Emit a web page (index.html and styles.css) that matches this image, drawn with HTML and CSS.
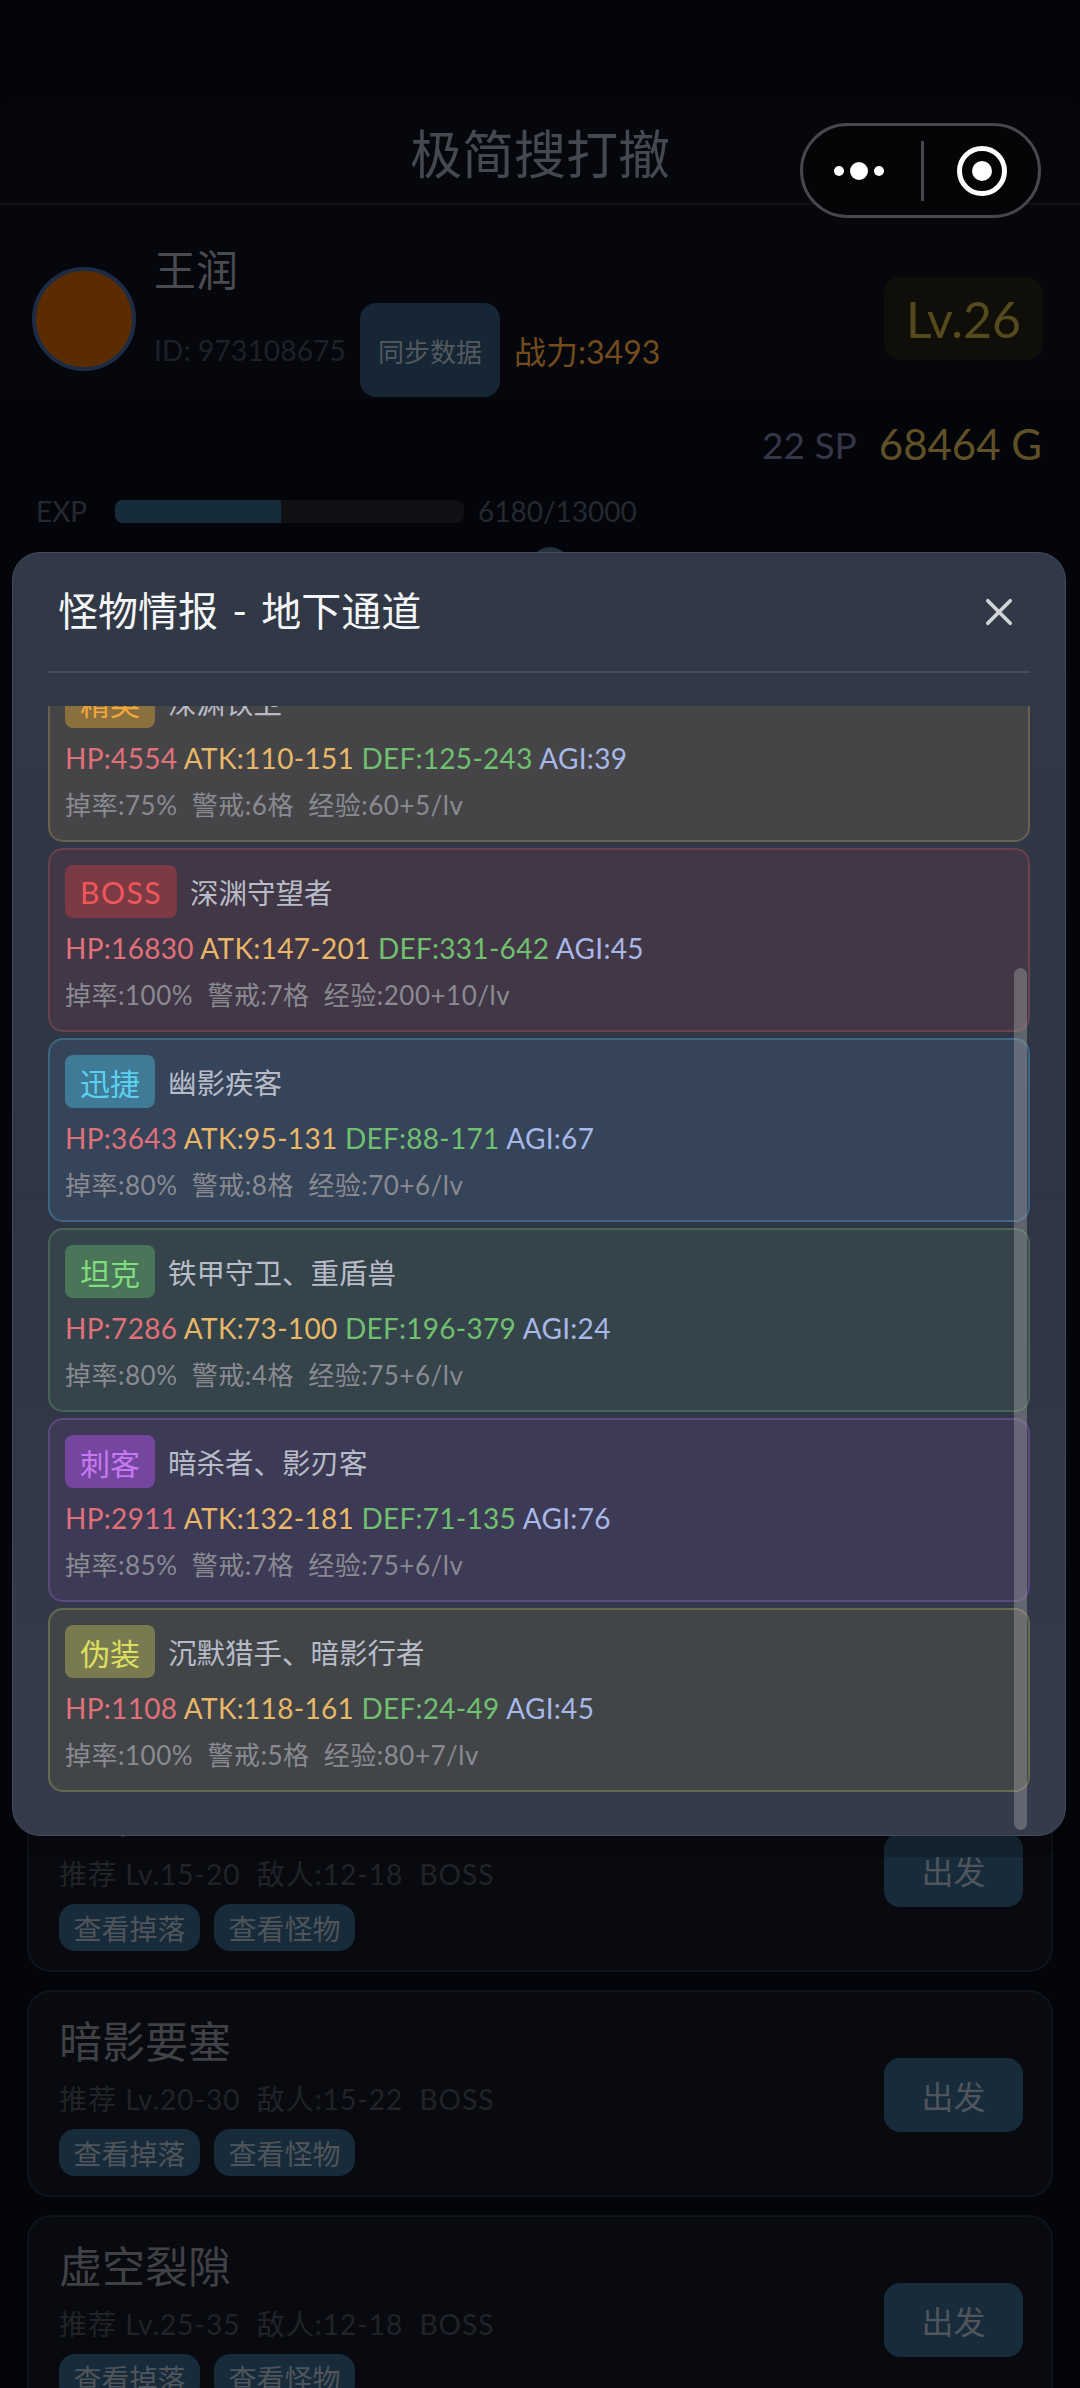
FILE: index.html
```html
<!DOCTYPE html>
<html lang="zh-CN">
<head>
  <meta charset="UTF-8" />
  <title>极简搜打撤</title>
  <link rel="stylesheet" href="styles.css">
</head>
<body>

  <div class="pagina">
    <div class="navbar">
      <span class="navbar-titulo">极简搜打撤</span>
    </div>

    <div class="perfil">
      <div class="avatar"></div>
      <div class="perfil-info">
        <div class="nome">王润</div>
        <div class="perfil-linha">
          <span class="id">ID: 973108675</span>
          <span class="btn-sync">同步数据</span>
          <span class="poder">战力:3493</span>
        </div>
      </div>
      <div class="nivel">Lv.26</div>
    </div>

    <div class="moedas">
      <span class="sp">22 SP</span>
      <span class="ouro">68464 G</span>
    </div>

    <div class="exp">
      <span class="exp-label">EXP</span>
      <div class="exp-barra"><div class="exp-fill" style="width: 47.5%"></div></div>
      <span class="exp-texto">6180/13000</span>
    </div>

    <div class="mapas">
      <div class="mapa">
        <div class="mapa-info">
          <div class="mapa-nome">地下通道</div>
          <div class="mapa-sub">推荐 Lv.15-20&nbsp;&nbsp;敌人:12-18&nbsp;&nbsp;BOSS</div>
          <div class="mapa-botoes"><span>查看掉落</span><span>查看怪物</span></div>
        </div>
        <div class="btn-sair">出发</div>
      </div>
      <div class="mapa">
        <div class="mapa-info">
          <div class="mapa-nome">暗影要塞</div>
          <div class="mapa-sub">推荐 Lv.20-30&nbsp;&nbsp;敌人:15-22&nbsp;&nbsp;BOSS</div>
          <div class="mapa-botoes"><span>查看掉落</span><span>查看怪物</span></div>
        </div>
        <div class="btn-sair">出发</div>
      </div>
      <div class="mapa">
        <div class="mapa-info">
          <div class="mapa-nome">虚空裂隙</div>
          <div class="mapa-sub">推荐 Lv.25-35&nbsp;&nbsp;敌人:12-18&nbsp;&nbsp;BOSS</div>
          <div class="mapa-botoes"><span>查看掉落</span><span>查看怪物</span></div>
        </div>
        <div class="btn-sair">出发</div>
      </div>
    </div>
  </div>

  <!-- botao do mini programa -->
  <div class="capsula">
    <svg class="capsula-mais" width="60" height="20" viewBox="0 0 60 20">
      <circle cx="10" cy="10" r="5" fill="#fff" />
      <circle cx="30" cy="10" r="9" fill="#fff" />
      <circle cx="50" cy="10" r="5" fill="#fff" />
    </svg>
    <span class="capsula-div"></span>
    <svg class="capsula-alvo" width="52" height="52" viewBox="0 0 52 52">
      <circle cx="26" cy="26" r="22.5" fill="none" stroke="#fff" stroke-width="5" />
      <circle cx="26" cy="26" r="10" fill="#fff" />
    </svg>
  </div>

  <div class="bolinha"></div>

  <!-- modal de monstros -->
  <div class="modal">
    <div class="modal-topo">
      <span class="modal-titulo">怪物情报 - 地下通道</span>
      <svg class="fechar" width="30" height="30" viewBox="0 0 30 30">
        <path d="M3 3 L27 27 M27 3 L3 27" stroke="#d0d2d6" stroke-width="4" stroke-linecap="round" fill="none" />
      </svg>
    </div>

    <div class="lista">
      <div class="monstro elite primeiro">
        <div class="monstro-topo"><span class="tag">精英</span><span class="monstro-nome">深渊铁卫</span></div>
        <div class="stats"><span class="hp">HP:4554</span> <span class="atk">ATK:110-151</span> <span class="def">DEF:125-243</span> <span class="agi">AGI:39</span></div>
        <div class="extra">掉率:75%&nbsp;&nbsp;警戒:6格&nbsp;&nbsp;经验:60+5/lv</div>
      </div>
      <div class="monstro boss">
        <div class="monstro-topo"><span class="tag">BOSS</span><span class="monstro-nome">深渊守望者</span></div>
        <div class="stats"><span class="hp">HP:16830</span> <span class="atk">ATK:147-201</span> <span class="def">DEF:331-642</span> <span class="agi">AGI:45</span></div>
        <div class="extra">掉率:100%&nbsp;&nbsp;警戒:7格&nbsp;&nbsp;经验:200+10/lv</div>
      </div>
      <div class="monstro rapido">
        <div class="monstro-topo"><span class="tag">迅捷</span><span class="monstro-nome">幽影疾客</span></div>
        <div class="stats"><span class="hp">HP:3643</span> <span class="atk">ATK:95-131</span> <span class="def">DEF:88-171</span> <span class="agi">AGI:67</span></div>
        <div class="extra">掉率:80%&nbsp;&nbsp;警戒:8格&nbsp;&nbsp;经验:70+6/lv</div>
      </div>
      <div class="monstro tanque">
        <div class="monstro-topo"><span class="tag">坦克</span><span class="monstro-nome">铁甲守卫、重盾兽</span></div>
        <div class="stats"><span class="hp">HP:7286</span> <span class="atk">ATK:73-100</span> <span class="def">DEF:196-379</span> <span class="agi">AGI:24</span></div>
        <div class="extra">掉率:80%&nbsp;&nbsp;警戒:4格&nbsp;&nbsp;经验:75+6/lv</div>
      </div>
      <div class="monstro assassino">
        <div class="monstro-topo"><span class="tag">刺客</span><span class="monstro-nome">暗杀者、影刃客</span></div>
        <div class="stats"><span class="hp">HP:2911</span> <span class="atk">ATK:132-181</span> <span class="def">DEF:71-135</span> <span class="agi">AGI:76</span></div>
        <div class="extra">掉率:85%&nbsp;&nbsp;警戒:7格&nbsp;&nbsp;经验:75+6/lv</div>
      </div>
      <div class="monstro disfarce">
        <div class="monstro-topo"><span class="tag">伪装</span><span class="monstro-nome">沉默猎手、暗影行者</span></div>
        <div class="stats"><span class="hp">HP:1108</span> <span class="atk">ATK:118-161</span> <span class="def">DEF:24-49</span> <span class="agi">AGI:45</span></div>
        <div class="extra">掉率:100%&nbsp;&nbsp;警戒:5格&nbsp;&nbsp;经验:80+7/lv</div>
      </div>
      <div class="rolagem"></div>
    </div>
  </div>

</body>
</html>
```

FILE: styles.css
```css
* {
  box-sizing: border-box;
}

html, body {
  margin: 0;
  height: 2388px;
  overflow: hidden;
}

body {
  font-family: Lato, "Noto Sans CJK SC", sans-serif;
  background-color: #04050a;
  position: relative;
}

.pagina {
  padding-top: 103px;
}

.navbar {
  height: 102px;
  display: flex;
  justify-content: center;
  align-items: center;
  background-color: #05070c;
  border-bottom: 2px solid #0e1015;
  border-radius: 12px 12px 0 0;
}

.navbar-titulo {
  font-size: 52px;
  color: #45484f;
  margin-top: -4px;
}

.perfil {
  display: flex;
  align-items: flex-start;
  padding: 44px 37px 0 32px;
  height: 194px;
  background-color: #05070c;
}

.avatar {
  width: 104px;
  height: 104px;
  margin-top: 18px;
  border-radius: 50%;
  background-color: #5b2c00;
  border: 4px solid #1d2c44;
  flex-shrink: 0;
}

.perfil-info {
  margin-left: 18px;
  flex: 1;
}

.nome {
  font-size: 42px;
  line-height: 42px;
  color: #4a4b50;
}

.perfil-linha {
  display: flex;
  align-items: center;
  gap: 14px;
  margin-top: 12px;
}

.id {
  font-size: 28px;
  letter-spacing: 0.2px;
  color: #1e2128;
}

.btn-sync {
  width: 140px;
  height: 94px;
  display: flex;
  justify-content: center;
  align-items: center;
  border-radius: 16px;
  background-color: #162634;
  font-size: 26px;
  color: #53595f;
}

.poder {
  font-size: 32px;
  color: #744b1d;
}

.nivel {
  width: 159px;
  height: 83px;
  margin-top: 28px;
  display: flex;
  justify-content: center;
  align-items: center;
  border-radius: 16px;
  background-color: #0f0e09;
  font-size: 50px;
  color: #554a1e;
}

.moedas {
  display: flex;
  justify-content: flex-end;
  align-items: center;
  gap: 22px;
  height: 50px;
  padding-right: 38px;
  margin-top: 20px;
}

.sp {
  font-size: 37px;
  color: #363649;
}

.ouro {
  font-size: 42px;
  color: #5f5027;
}

.exp {
  display: flex;
  align-items: center;
  height: 60px;
  padding: 0 36px;
  margin-top: 12px;
  gap: 14px;
  font-size: 28px;
  color: #242931;
}

.exp-label {
  width: 65px;
}

.exp-barra {
  width: 349px;
  height: 23px;
  border-radius: 8px;
  background-color: #0f1115;
  overflow: hidden;
}

.exp-fill {
  height: 100%;
  background-color: #172c3a;
}

.mapas {
  display: flex;
  flex-direction: column;
  gap: 18px;
  padding: 0 27px;
  margin-top: 1224px;
}

.mapa {
  flex-shrink: 0;
  height: 207px;
  padding: 0 28px 0 30px;
  display: flex;
  justify-content: space-between;
  align-items: center;
  border: 2px solid #11131a;
  border-radius: 24px;
  background-color: #080a0f;
}

.mapa-info {
  padding-top: 3px;
}

.mapa-nome {
  font-size: 43px;
  line-height: 56px;
  color: #404146;
}

.mapa-sub {
  font-size: 28px;
  line-height: 40px;
  letter-spacing: 1px;
  margin-top: 9px;
  color: #212329;
}

.mapa-botoes {
  display: flex;
  gap: 14px;
  margin-top: 10px;
}

.mapa-botoes span {
  width: 141px;
  height: 47px;
  display: flex;
  justify-content: center;
  align-items: center;
  border-radius: 16px;
  background-color: #172b3a;
  font-size: 28px;
  color: #4f555b;
}

.btn-sair {
  width: 139px;
  height: 74px;
  display: flex;
  justify-content: center;
  align-items: center;
  border-radius: 16px;
  background-color: #172b3a;
  font-size: 32px;
  color: #4f555b;
  margin-top: 3px;
}

/* capsula do wechat */
.capsula {
  position: absolute;
  left: 800px;
  top: 123px;
  width: 241px;
  height: 95px;
  display: flex;
  align-items: center;
  border: 3px solid #48484c;
  border-radius: 48px;
  background-color: #050508;
}

.capsula-mais {
  margin-left: 26px;
}

.capsula-div {
  width: 3px;
  height: 60px;
  margin-left: 32px;
  background-color: #48484c;
}

.capsula-alvo {
  margin-left: 32px;
}

.bolinha {
  position: absolute;
  left: 530px;
  top: 547px;
  width: 40px;
  height: 40px;
  border-radius: 50%;
  background-color: #27303f;
}

/* modal */
.modal {
  position: absolute;
  left: 12px;
  top: 552px;
  width: 1054px;
  height: 1284px;
  padding: 0 35px;
  display: flex;
  flex-direction: column;
  border: 1px solid #444b59;
  border-radius: 28px;
  background: linear-gradient(#323946, #2f3543 50%, #363b4c);
  box-shadow: 0 21px 0 rgba(0, 0, 0, 0.2);
}

.modal-topo {
  height: 120px;
  flex-shrink: 0;
  display: flex;
  justify-content: space-between;
  align-items: center;
  padding: 0 17px 0 10px;
  border-bottom: 2px solid #454c5c;
}

.modal-titulo {
  font-size: 40px;
  word-spacing: 4px;
  color: #f5f6f8;
  margin-top: -6px;
}

.fechar {
  width: 28px;
  height: 28px;
}

.lista {
  margin-top: 33px;
  flex: 1;
  position: relative;
  overflow: hidden;
  display: flex;
  flex-direction: column;
  gap: 6px;
}

.monstro {
  flex-shrink: 0;
  height: 184px;
  padding: 15px 15px 0 15px;
  border: 2px solid;
  border-radius: 15px;
}

.primeiro {
  margin-top: -48px;
}

.monstro-topo {
  display: flex;
  align-items: center;
  gap: 13px;
}

.tag {
  height: 53px;
  padding: 0 15px;
  display: flex;
  align-items: center;
  border-radius: 8px;
  font-size: 30px;
}

.monstro-nome {
  font-size: 28.5px;
  color: #b8bcc8;
}

.stats {
  font-size: 28px;
  line-height: 40px;
  letter-spacing: 0.3px;
  margin-top: 10px;
}

.hp { color: #e0707a; }
.atk { color: #e8b868; }
.def { color: #70c070; }
.agi { color: #a8b8e8; }

.extra {
  font-size: 26px;
  line-height: 36px;
  letter-spacing: 0.5px;
  margin-top: 9px;
  color: #8a8a92;
}

.elite { background-color: #454548; border-color: #67614e; }
.elite .tag { background-color: #8a6f3f; color: #f2a93b; }

.boss { background-color: #423746; border-color: #6a4150; }
.boss .tag { background-color: #7c3a44; color: #f0575a; letter-spacing: 1.5px; }

.rapido { background-color: #354458; border-color: #3f6585; }
.rapido .tag { background-color: #3f7a96; color: #5cd0f0; }

.tanque { background-color: #35434b; border-color: #466458; }
.tanque .tag { background-color: #4a7559; color: #80dd80; }

.assassino { background-color: #3d3a55; border-color: #5a4a80; }
.assassino .tag { background-color: #7446a0; color: #c878f0; }

.disfarce { background-color: #414548; border-color: #666b50; }
.disfarce .tag { background-color: #7a7a50; color: #dde060; }

.rolagem {
  position: absolute;
  right: 3px;
  top: 262px;
  width: 13px;
  height: 862px;
  border-radius: 7px;
  background-color: rgba(170, 170, 170, 0.4);
}
```
